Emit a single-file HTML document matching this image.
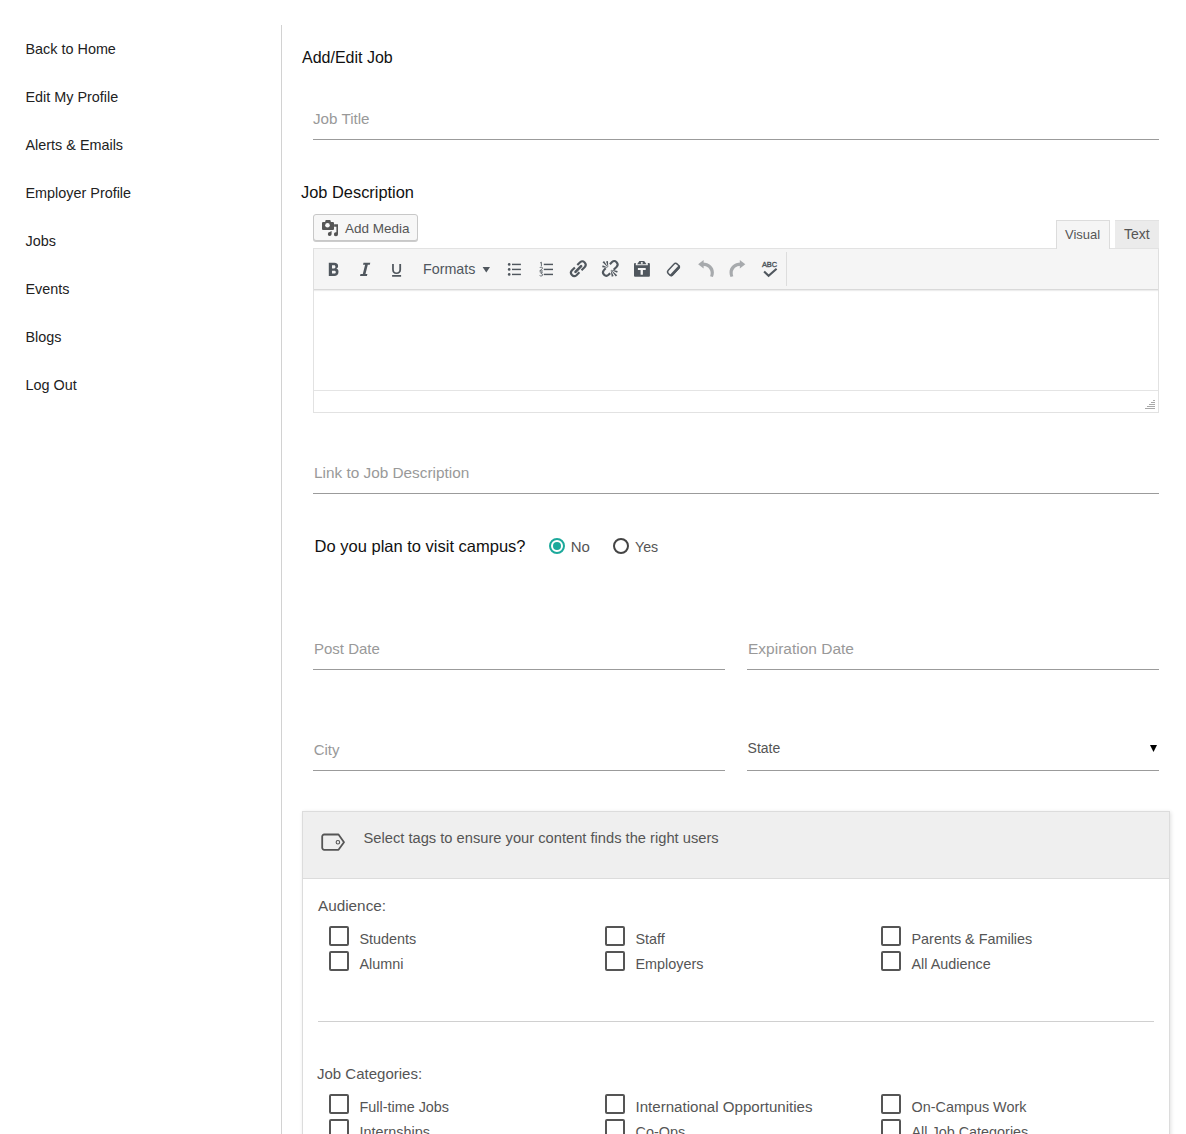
<!DOCTYPE html>
<html><head><meta charset="utf-8"><title>Add/Edit Job</title>
<style>
html,body{margin:0;padding:0;background:#fff;}
body{width:1186px;height:1134px;position:relative;overflow:hidden;font-family:"Liberation Sans",sans-serif;}
.t{position:absolute;white-space:nowrap;}
</style></head><body>
<div class="t" style="left:25.5px;top:41.81px;font-size:14.4px;line-height:14.4px;color:#222;font-weight:normal;">Back to Home</div>
<div class="t" style="left:25.5px;top:89.81px;font-size:14.4px;line-height:14.4px;color:#222;font-weight:normal;">Edit My Profile</div>
<div class="t" style="left:25.5px;top:137.81px;font-size:14.4px;line-height:14.4px;color:#222;font-weight:normal;">Alerts &amp; Emails</div>
<div class="t" style="left:25.5px;top:185.81px;font-size:14.4px;line-height:14.4px;color:#222;font-weight:normal;">Employer Profile</div>
<div class="t" style="left:25.5px;top:233.81px;font-size:14.4px;line-height:14.4px;color:#222;font-weight:normal;">Jobs</div>
<div class="t" style="left:25.5px;top:281.81px;font-size:14.4px;line-height:14.4px;color:#222;font-weight:normal;">Events</div>
<div class="t" style="left:25.5px;top:329.81px;font-size:14.4px;line-height:14.4px;color:#222;font-weight:normal;">Blogs</div>
<div class="t" style="left:25.5px;top:377.81px;font-size:14.4px;line-height:14.4px;color:#222;font-weight:normal;">Log Out</div>
<div style="position:absolute;left:281px;top:25px;width:1px;height:1109px;background:#d2d2d2"></div>
<div class="t" style="left:302px;top:50.25px;font-size:16px;line-height:16px;color:#111;font-weight:normal;">Add/Edit Job</div>
<div class="t" style="left:313px;top:111.13px;font-size:15.2px;line-height:15.2px;color:#999;font-weight:normal;">Job Title</div>
<div style="position:absolute;left:313px;top:139px;width:846px;height:1px;background:#9b9b9b"></div>
<div class="t" style="left:301px;top:183.81px;font-size:16.4px;line-height:16.4px;color:#111;font-weight:normal;">Job Description</div>
<div style="position:absolute;left:313px;top:214px;width:103px;height:25px;border:1px solid #c8c8c8;border-radius:3px;background:#f7f7f7;box-shadow:0 1px 0 #cccccc;"></div>
<svg style="position:absolute;left:318px;top:216px" width="24" height="24" viewBox="0 0 24 24"><g fill="#555"><path d="M4 7a1.1 1.1 0 0 1 1.1-1.1h2l.6-1.9h4.6l.6 1.9h2a1.1 1.1 0 0 1 1.1 1.1v5.9a1.1 1.1 0 0 1-1.1 1.1H5.1A1.1 1.1 0 0 1 4 12.9z"/><path d="M16.1 8.25h3.9v10a2.05 2.05 0 1 1-1.6-2v-5.5h-2.3z"/><path d="M11.7 16.1l1.9-1v3.2a1.9 1.9 0 1 1-1.9-2.2z"/></g><circle cx="9.5" cy="9.3" r="2.3" fill="#f7f7f7"/></svg>
<div class="t" style="left:345px;top:221.97px;font-size:13.5px;line-height:13.5px;color:#555;font-weight:normal;">Add Media</div>
<div style="position:absolute;left:1056px;top:220px;width:52px;height:28px;border:1px solid #dcdcdc;border-bottom:none;background:#f5f5f5;z-index:2"></div>
<div class="t" style="left:1065px;top:227.99px;font-size:13px;line-height:13px;color:#555;font-weight:normal;z-index:3">Visual</div>
<div style="position:absolute;left:1115px;top:220px;width:44px;height:28px;background:#ebebeb;border-top:1px solid #e2e2e2"></div>
<div class="t" style="left:1124px;top:227.15px;font-size:14px;line-height:14px;color:#555;font-weight:normal;">Text</div>
<div style="position:absolute;left:313px;top:248px;width:844px;height:163px;border:1px solid #e2e2e2;background:#fff"></div>
<div style="position:absolute;left:314px;top:249px;width:844px;height:40px;background:#f5f5f5;border-bottom:1px solid #d9d9d9;box-shadow:0 1px 1px rgba(0,0,0,.07)"></div>
<div style="position:absolute;left:314px;top:390px;width:844px;height:1px;background:#e4e4e4"></div>
<div style="position:absolute;left:1153px;top:400px;width:2px;height:1px;background:#a8a8a8"></div>
<div style="position:absolute;left:1151px;top:402px;width:4px;height:1px;background:#a8a8a8"></div>
<div style="position:absolute;left:1149px;top:404px;width:6px;height:1px;background:#a8a8a8"></div>
<div style="position:absolute;left:1147px;top:406px;width:8px;height:1px;background:#a8a8a8"></div>
<div style="position:absolute;left:1145px;top:408px;width:10px;height:1px;background:#a8a8a8"></div>
<div style="position:absolute;left:786px;top:252px;width:1px;height:34px;background:#dddddd"></div>

<svg style="position:absolute;left:320px;top:256px" width="480" height="26" viewBox="320 256 480 26">
<g fill="#50575e">
<path fill-rule="evenodd" d="M328.8 262.8H334.3C336.9 262.8 338.1 264.1 338.1 265.9C338.1 267.2 337.4 268.1 336.3 268.6C337.7 269 338.5 270.1 338.5 271.7C338.5 274.6 336.6 276 334.4 276H328.8ZM332 265.3V268.4H334.1C335 268.4 335.4 267.8 335.4 266.85C335.4 265.9 335 265.3 334.1 265.3ZM332 270.8V273.6H334.4C335.3 273.6 335.8 273 335.8 272.2C335.8 271.4 335.3 270.8 334.4 270.8Z"/>
<path d="M363.5 262.8H370.3L369.8 264.8H367.8L365.5 274H367.4L366.9 276H360L360.5 274H362.8L365.1 264.8H363Z"/>
<path d="M392.1 263.9h1.75v5.6c0 1.9.85 2.95 2.65 2.95s2.8-1.05 2.8-2.95v-5.6h1.8v5.7c0 2.85-1.7 4.45-4.6 4.45s-4.4-1.6-4.4-4.45zM392.1 274.9h9v1.75h-9z"/>
<path d="M482.6 267h7.4l-3.7 5.4z"/>
<circle cx="509.2" cy="264.4" r="1.35"/><circle cx="509.2" cy="269.4" r="1.35"/><circle cx="509.2" cy="274.4" r="1.35"/>
<rect x="512" y="263.7" width="8.9" height="1.45"/><rect x="512" y="268.7" width="8.9" height="1.45"/><rect x="512" y="273.7" width="8.9" height="1.45"/>
<rect x="543.8" y="263.7" width="9.2" height="1.45"/><rect x="543.8" y="268.7" width="9.2" height="1.45"/><rect x="543.8" y="273.7" width="9.2" height="1.45"/>
</g>
<path fill="none" stroke="#50575e" stroke-width=".85" d="M540.1 263L541.4 262.2V266.1M539.7 268Q540.2 267.1 541.2 267.1Q542.5 267.1 542.5 268.2Q542.5 268.9 539.7 270.9H542.8M539.8 272.1H542.4L541 273.5Q542.6 273.6 542.6 274.8Q542.6 276 541.2 276Q540.3 276 539.6 275.5"/>
<g fill="none" stroke="#50575e" stroke-width="2.1" stroke-linecap="butt" transform="translate(564 256)">
<path d="M13.3 9.1L16.12 6.27A3.3 3.3 0 0 1 20.78 10.93L17.5 14.2"/>
<path d="M10.9 11.45L7.82 14.52A3.3 3.3 0 0 0 12.48 19.18L15.4 16.26"/>
<path d="M11.5 15.8L17.1 10.2" stroke-width="2.6" stroke-linecap="round"/>
</g>
<g fill="none" stroke="#50575e" stroke-width="2.1" transform="translate(596 256)">
<path d="M13.9 8.15L16.02 6.02A3.3 3.3 0 0 1 20.68 10.68L17.7 13.66"/>
<path d="M9.7 12.35L7.92 14.12A3.3 3.3 0 0 0 12.58 18.78L14.2 17.16"/>
</g>
<path fill="#50575e" transform="translate(596 256)" d="M11.88 11.11 L8.08 4.97 L6.52 6.23 L11.72 11.24zM12.24 11.00 L11.98 5.01 L10.02 5.39 L12.05 11.03zM11.55 11.49 L6.66 9.23 L6.14 11.17 L11.50 11.69zM15.33 13.95 L21.08 16.85 L21.72 14.95 L15.39 13.76zM15.07 14.25 L19.77 20.58 L21.23 19.22 L15.22 14.12zM14.74 14.39 L15.74 20.70 L17.66 20.10 L14.93 14.33z"/>
<g fill="#50575e" transform="translate(628 256)">
<path d="M6 8a1 1 0 0 1 1-1h.8v2.2h12V7h1.1a1 1 0 0 1 1 1v11.7a1 1 0 0 1-1 1H7a1 1 0 0 1-1-1z"/>
<path d="M11.4 5.1h4.8l2.3 3.2H9.1z"/>
<path d="M7.8 9.9h12v10h-12z"/>
</g>
<g fill="#f5f5f5" transform="translate(628 256)">
<rect x="12.9" y="6.1" width="1.8" height="1.7"/>
<path d="M9.9 12.1h7.8v1.8h-2.8v4.8h-2.3v-4.8H9.9z"/>
</g>
<g transform="rotate(-47 673.4 269.4)">
<rect x="666.9" y="266.2" width="13" height="6.4" rx="2.4" fill="none" stroke="#50575e" stroke-width="1.45"/>
<path d="M666.2 270.5h14.4v.4a2.4 2.4 0 0 1-2.4 2.4h-9.6a2.4 2.4 0 0 1-2.4-2.4z" fill="#50575e"/>
</g>
<g fill="#a7aaad">
<path d="M698.1 264.2L703.6 260.1V268.6z"/>
<path d="M702.5 262.6C709.5 262.6 713.9 267 713.9 272.6C713.9 274.1 713.6 275.6 712.9 277L710.1 276.2C710.5 275.2 710.7 274.1 710.7 273.1C710.7 268.9 707.4 265.8 702.5 265.8Z"/>
<path d="M745.3 264.2L739.8 260.1V268.6z"/>
<path d="M 740.9 262.6 C 733.9 262.6 729.5 267.0 729.5 272.6 C 729.5 274.1 729.8 275.6 730.5 277.0 L 733.3 276.2 C 732.9 275.2 732.7 274.1 732.7 273.1 C 732.7 268.9 736.0 265.8 740.9 265.8 Z"/>
</g>
<text x="761.9" y="266.9" font-family="Liberation Sans" font-size="7.9" textLength="15.3" lengthAdjust="spacingAndGlyphs" fill="#50575e" stroke="#50575e" stroke-width=".4">ABC</text>
<path d="M764.1 271.4l4.5 4.4 8-7" fill="none" stroke="#50575e" stroke-width="2.1"/>
</svg>
<div class="t" style="left:423px;top:262.19px;font-size:14.3px;line-height:14.3px;color:#50575e;font-weight:normal;">Formats</div>
<div class="t" style="left:314px;top:465.00px;font-size:15.35px;line-height:15.35px;color:#999;font-weight:normal;">Link to Job Description</div>
<div style="position:absolute;left:313px;top:493px;width:846px;height:1px;background:#9b9b9b"></div>
<div class="t" style="left:314.6px;top:537.83px;font-size:16.5px;line-height:16.5px;color:#111;font-weight:normal;">Do you plan to visit campus?</div>
<div style="position:absolute;left:549px;top:538px;width:12px;height:12px;border:2px solid #1ca99b;border-radius:50%"></div>
<div style="position:absolute;left:553px;top:542px;width:8px;height:8px;background:#1ca99b;border-radius:50%"></div>
<div class="t" style="left:570.7px;top:539.00px;font-size:15px;line-height:15px;color:#555;font-weight:normal;">No</div>
<div style="position:absolute;left:613px;top:538px;width:12px;height:12px;border:2px solid #444;border-radius:50%"></div>
<div class="t" style="left:635px;top:539.68px;font-size:14.2px;line-height:14.2px;color:#555;font-weight:normal;">Yes</div>
<div class="t" style="left:314px;top:641.30px;font-size:15px;line-height:15px;color:#999;font-weight:normal;">Post Date</div>
<div style="position:absolute;left:313px;top:669px;width:412px;height:1px;background:#9b9b9b"></div>
<div class="t" style="left:748px;top:640.88px;font-size:15.5px;line-height:15.5px;color:#999;font-weight:normal;">Expiration Date</div>
<div style="position:absolute;left:747px;top:669px;width:412px;height:1px;background:#9b9b9b"></div>
<div class="t" style="left:313.7px;top:742.30px;font-size:15px;line-height:15px;color:#999;font-weight:normal;">City</div>
<div style="position:absolute;left:313px;top:770px;width:412px;height:1px;background:#9b9b9b"></div>
<div class="t" style="left:747.6px;top:740.95px;font-size:14px;line-height:14px;color:#555;font-weight:normal;">State</div>
<div style="position:absolute;left:747px;top:770px;width:412px;height:1px;background:#9b9b9b"></div>
<svg style="position:absolute;left:1150px;top:745px" width="7" height="7" viewBox="0 0 7 7"><path d="M0 0h7L3.5 7z" fill="#000"/></svg>
<div style="position:absolute;left:302px;top:811px;width:866px;height:400px;border:1px solid #dcdcdc;background:#fff;box-shadow:1px 1px 4px rgba(0,0,0,.12)"></div>
<div style="position:absolute;left:303px;top:812px;width:866px;height:66px;background:#efefef;border-bottom:1px solid #dcdcdc"></div>
<svg style="position:absolute;left:321px;top:833px" width="26" height="20" viewBox="0 0 26 20"><path d="M3.2 1.5h14.3l5.5 7.7-5.5 7.6H3.2a2 2 0 0 1-2-2V3.5a2 2 0 0 1 2-2z" fill="none" stroke="#555" stroke-width="1.8" stroke-linejoin="round"/><circle cx="16.9" cy="9.2" r="1.75" fill="none" stroke="#555" stroke-width="1.1"/></svg>
<div class="t" style="left:363.5px;top:831.05px;font-size:14.7px;line-height:14.7px;color:#555;font-weight:normal;">Select tags to ensure your content finds the right users</div>
<div class="t" style="left:318px;top:898.05px;font-size:15.3px;line-height:15.3px;color:#555;font-weight:normal;">Audience:</div>
<div style="position:absolute;left:329px;top:926px;width:16px;height:16px;border:2px solid #555;border-radius:2px"></div>
<div class="t" style="left:359.5px;top:931.81px;font-size:14.4px;line-height:14.4px;color:#555;font-weight:normal;">Students</div>
<div style="position:absolute;left:329px;top:951px;width:16px;height:16px;border:2px solid #555;border-radius:2px"></div>
<div class="t" style="left:359.5px;top:956.81px;font-size:14.4px;line-height:14.4px;color:#555;font-weight:normal;">Alumni</div>
<div style="position:absolute;left:605px;top:926px;width:16px;height:16px;border:2px solid #555;border-radius:2px"></div>
<div class="t" style="left:635.5px;top:931.81px;font-size:14.4px;line-height:14.4px;color:#555;font-weight:normal;">Staff</div>
<div style="position:absolute;left:605px;top:951px;width:16px;height:16px;border:2px solid #555;border-radius:2px"></div>
<div class="t" style="left:635.5px;top:956.81px;font-size:14.4px;line-height:14.4px;color:#555;font-weight:normal;">Employers</div>
<div style="position:absolute;left:881px;top:926px;width:16px;height:16px;border:2px solid #555;border-radius:2px"></div>
<div class="t" style="left:911.5px;top:931.81px;font-size:14.4px;line-height:14.4px;color:#555;font-weight:normal;">Parents &amp; Families</div>
<div style="position:absolute;left:881px;top:951px;width:16px;height:16px;border:2px solid #555;border-radius:2px"></div>
<div class="t" style="left:911.5px;top:956.81px;font-size:14.4px;line-height:14.4px;color:#555;font-weight:normal;">All Audience</div>
<div style="position:absolute;left:318px;top:1021px;width:836px;height:1px;background:#d0d0d0"></div>
<div class="t" style="left:317px;top:1065.90px;font-size:15px;line-height:15px;color:#555;font-weight:normal;">Job Categories:</div>
<div style="position:absolute;left:329px;top:1094px;width:16px;height:16px;border:2px solid #555;border-radius:2px"></div>
<div class="t" style="left:359.5px;top:1100.01px;font-size:14.4px;line-height:14.4px;color:#555;font-weight:normal;">Full-time Jobs</div>
<div style="position:absolute;left:329px;top:1119px;width:16px;height:16px;border:2px solid #555;border-radius:2px"></div>
<div class="t" style="left:359.5px;top:1125.01px;font-size:14.4px;line-height:14.4px;color:#555;font-weight:normal;">Internships</div>
<div style="position:absolute;left:605px;top:1094px;width:16px;height:16px;border:2px solid #555;border-radius:2px"></div>
<div class="t" style="left:635.5px;top:1099.41px;font-size:15.1px;line-height:15.1px;color:#555;font-weight:normal;">International Opportunities</div>
<div style="position:absolute;left:605px;top:1119px;width:16px;height:16px;border:2px solid #555;border-radius:2px"></div>
<div class="t" style="left:635.5px;top:1125.01px;font-size:14.4px;line-height:14.4px;color:#555;font-weight:normal;">Co-Ops</div>
<div style="position:absolute;left:881px;top:1094px;width:16px;height:16px;border:2px solid #555;border-radius:2px"></div>
<div class="t" style="left:911.5px;top:1100.01px;font-size:14.4px;line-height:14.4px;color:#555;font-weight:normal;">On-Campus Work</div>
<div style="position:absolute;left:881px;top:1119px;width:16px;height:16px;border:2px solid #555;border-radius:2px"></div>
<div class="t" style="left:911.5px;top:1125.01px;font-size:14.4px;line-height:14.4px;color:#555;font-weight:normal;">All Job Categories</div>
</body></html>
